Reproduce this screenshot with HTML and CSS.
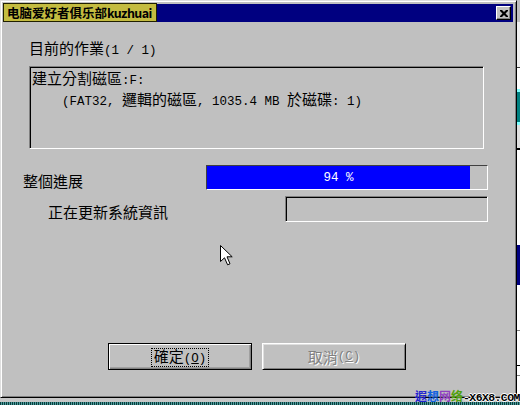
FILE: index.html
```html
<!DOCTYPE html>
<html lang="zh-Hant">
<head>
<meta charset="utf-8">
<title>分割進度</title>
<link rel="stylesheet" href="styles.css">
</head>
<body>
<div class="screen">
  <div class="dialog">
    <div class="titlebar">
      <button class="close" aria-label="close">
        <svg width="8" height="7" viewBox="0 0 8 7"><path d="M0 0h2l2 2 2-2h2v1l-2.5 2.5L8 6v1H6L4 5 2 7H0V6l2.5-2.5L0 1z" fill="#000"/></svg>
      </button>
    </div>
    <div class="content">
      <div class="task-label">目前的作業<span class="m">(1 / 1)</span></div>
      <div class="task-box">
        <div>建立分割磁區<span class="m">:F:</span></div>
        <div class="indent"><span class="m">(FAT32, </span>邏輯的磁區<span class="m">, 1035.4 MB </span>於磁碟<span class="m">: 1)</span></div>
      </div>
      <div class="progress-row">
        <div class="label">整個進展</div>
        <div class="progress"><div class="fill" style="width:94%"><span class="m">94 %</span></div></div>
      </div>
      <div class="status-row">
        <div class="label">正在更新系統資訊</div>
        <div class="field"></div>
      </div>
      <div class="buttons">
        <button class="btn default"><span class="focus">確定<span class="m">(<u>O</u>)</span></span></button>
        <button class="btn disabled">取消<span class="m">(<u>C</u>)</span></button>
      </div>
    </div>
  </div>
  <div class="edge-right"></div>
  <div class="edge-bottom"></div>

  <div class="club-tag">电脑爱好者俱乐部<span class="latin">kuzhuai</span></div>
  <div class="site-mark"><span class="c1">遐</span><span class="c2">想</span><span class="c3">网</span><span class="c4">络</span><span class="dom">-X6X8.COM</span></div>
  <svg class="pointer" width="13" height="21" viewBox="0 0 13 21"><path d="M0.5 0.5V16.5L4.5 12.8L7.6 19.8L10 18.8L7 11.8H12.2Z" fill="#fff" stroke="#000" stroke-width="1"/></svg>
</div>
</body>
</html>
```
FILE: styles.css
```css
* { box-sizing: border-box; }
html, body { margin: 0; padding: 0; }
body {
  width: 520px;
  height: 405px;
  overflow: hidden;
  background: #c0c0c0;
  font-family: "Noto Sans CJK TC", "Noto Sans CJK SC", sans-serif;
  color: #000;
}
.m {
  font-family: "Liberation Mono", monospace;
  font-size: 12.5px;
}
.screen {
  position: relative;
  width: 520px;
  height: 405px;
  display: grid;
  grid-template-columns: 517px 3px;
  grid-template-rows: 398px 7px;
}
.dialog {
  grid-column: 1;
  grid-row: 1;
  background: #c0c0c0;
  border: 1px solid;
  border-color: #dfdfdf #000 #000 #dfdfdf;
  box-shadow: inset 1px 1px #fff, inset -1px -1px #808080;
  padding: 3px 3px 2px 3px;
  display: flex;
  flex-direction: column;
}
.titlebar {
  height: 18px;
  background: #000080;
  display: flex;
  justify-content: flex-end;
  align-items: center;
  padding-right: 2px;
}
.close {
  width: 15px;
  height: 14px;
  padding: 0;
  margin: 0;
  background: #c0c0c0;
  border: 1px solid;
  border-color: #fff #000 #000 #fff;
  box-shadow: inset -1px -1px #808080;
  display: flex;
  align-items: center;
  justify-content: center;
}
.close svg { display: block; }
.content {
  display: flex;
  flex-direction: column;
  font-size: 15px;
}
.task-label {
  margin: 18px 0 0 25px;
  height: 16px;
  line-height: 15px;
  white-space: nowrap;
}
.task-box {
  margin: 10px 0 0 25px;
  width: 455px;
  height: 83px;
  border: 1px solid;
  border-color: #808080 #fff #fff #808080;
  box-shadow: inset 1px 1px #000;
  padding: 2px 0 0 2px;
  line-height: 17px;
  white-space: nowrap;
}
.indent { padding-left: 30px; }
.progress-row, .status-row { display: flex; }
.progress-row { margin-top: 16px; }
.status-row { margin-top: 6px; }
.label {
  padding-top: 8px;
  line-height: 15px;
  white-space: nowrap;
}
.progress-row .label { margin-left: 19px; width: 183px; }
.status-row .label { margin-left: 44px; width: 237px; }
.progress {
  width: 282px;
  height: 25px;
  border: 1px solid;
  border-color: #404040 #fff #fff #404040;
}
.fill {
  height: 100%;
  background: #0000ff;
  color: #fff;
  display: flex;
  align-items: center;
  justify-content: center;
  white-space: pre;
}
.field {
  width: 203px;
  height: 26px;
  border: 1px solid;
  border-color: #808080 #fff #fff #808080;
  box-shadow: inset 1px 1px #000;
}
.buttons {
  display: flex;
  gap: 10px;
  margin: 121px 0 0 104px;
}
.btn {
  width: 144px;
  height: 27px;
  margin: 0;
  padding: 0;
  background: #c0c0c0;
  border: 1px solid;
  border-color: #fff #000 #000 #fff;
  box-shadow: inset 1px 1px #dfdfdf, inset -1px -1px #808080;
  font-family: "Noto Sans CJK TC", sans-serif;
  font-size: 15px;
  line-height: 14px;
  color: #000;
  display: flex;
  align-items: center;
  justify-content: center;
}
.btn.default {
  border-color: #000;
  box-shadow: inset 1px 1px #fff, inset -1px -1px #808080, inset -2px -2px #a0a0a0;
}
.focus {
  border: 1px dotted #000;
  padding: 0 2px 0 2px;
  line-height: 14px;
  margin-top: 2px;
}
.btn.disabled {
  color: #808080;
  text-shadow: 1px 1px 0 #fff;
}
.edge-right {
  grid-column: 2;
  grid-row: 1;
  background: linear-gradient(to bottom,
    #c0c0c0 0 22px, #f0f0f0 22px 67px, #404040 67px 68px, #fff 68px 89px,
    #80ffff 89px 92px, #008080 92px 122px, #80ffff 122px 125px,
    #e0e0e0 125px 148px, #000 148px 150px, #fff 150px 245px,
    #000080 245px 285px, #fff 285px 330px, #808080 330px 331px,
    #fff 331px 365px, #000 365px 366px, #fff 366px 375px,
    #808080 375px 376px, #fff 376px 398px);
}
.edge-bottom {
  grid-column: 1 / 3;
  grid-row: 2;
  background:
    linear-gradient(to bottom, #c8c8c8 0 4px, transparent 4px),
    repeating-linear-gradient(90deg, #0c3c3c 0 1px, #4c9c9c 1px 2px);
}
.club-tag {
  position: absolute;
  left: 3px;
  top: 3px;
  width: 154px;
  height: 19px;
  background: #c4bc40;
  border: 1px solid #202000;
  font-family: "Noto Sans CJK SC", sans-serif;
  font-weight: bold;
  font-size: 12.5px;
  line-height: 17px;
  padding-left: 3px;
  white-space: nowrap;
  overflow: hidden;
  color: #000;
}
.club-tag .latin { letter-spacing: -0.6px; }
.site-mark {
  position: absolute;
  left: 415px;
  top: 389px;
  font-family: "Noto Sans CJK SC", sans-serif;
  font-size: 12px;
  font-weight: bold;
  line-height: 14px;
  white-space: nowrap;
}
.c1 { color: #2020d0; }
.c2 { color: #1060e0; }
.c3 { color: #9040c0; }
.c4 { color: #50a010; }
.dom {
  font-family: "Liberation Mono", monospace;
  font-size: 11.5px;
  letter-spacing: -0.6px;
  color: #000;
  text-shadow: 1px 0 #fff, -1px 0 #fff, 0 1px #fff, 0 -1px #fff;
}
.pointer {
  position: absolute;
  left: 220px;
  top: 245px;
}
```
